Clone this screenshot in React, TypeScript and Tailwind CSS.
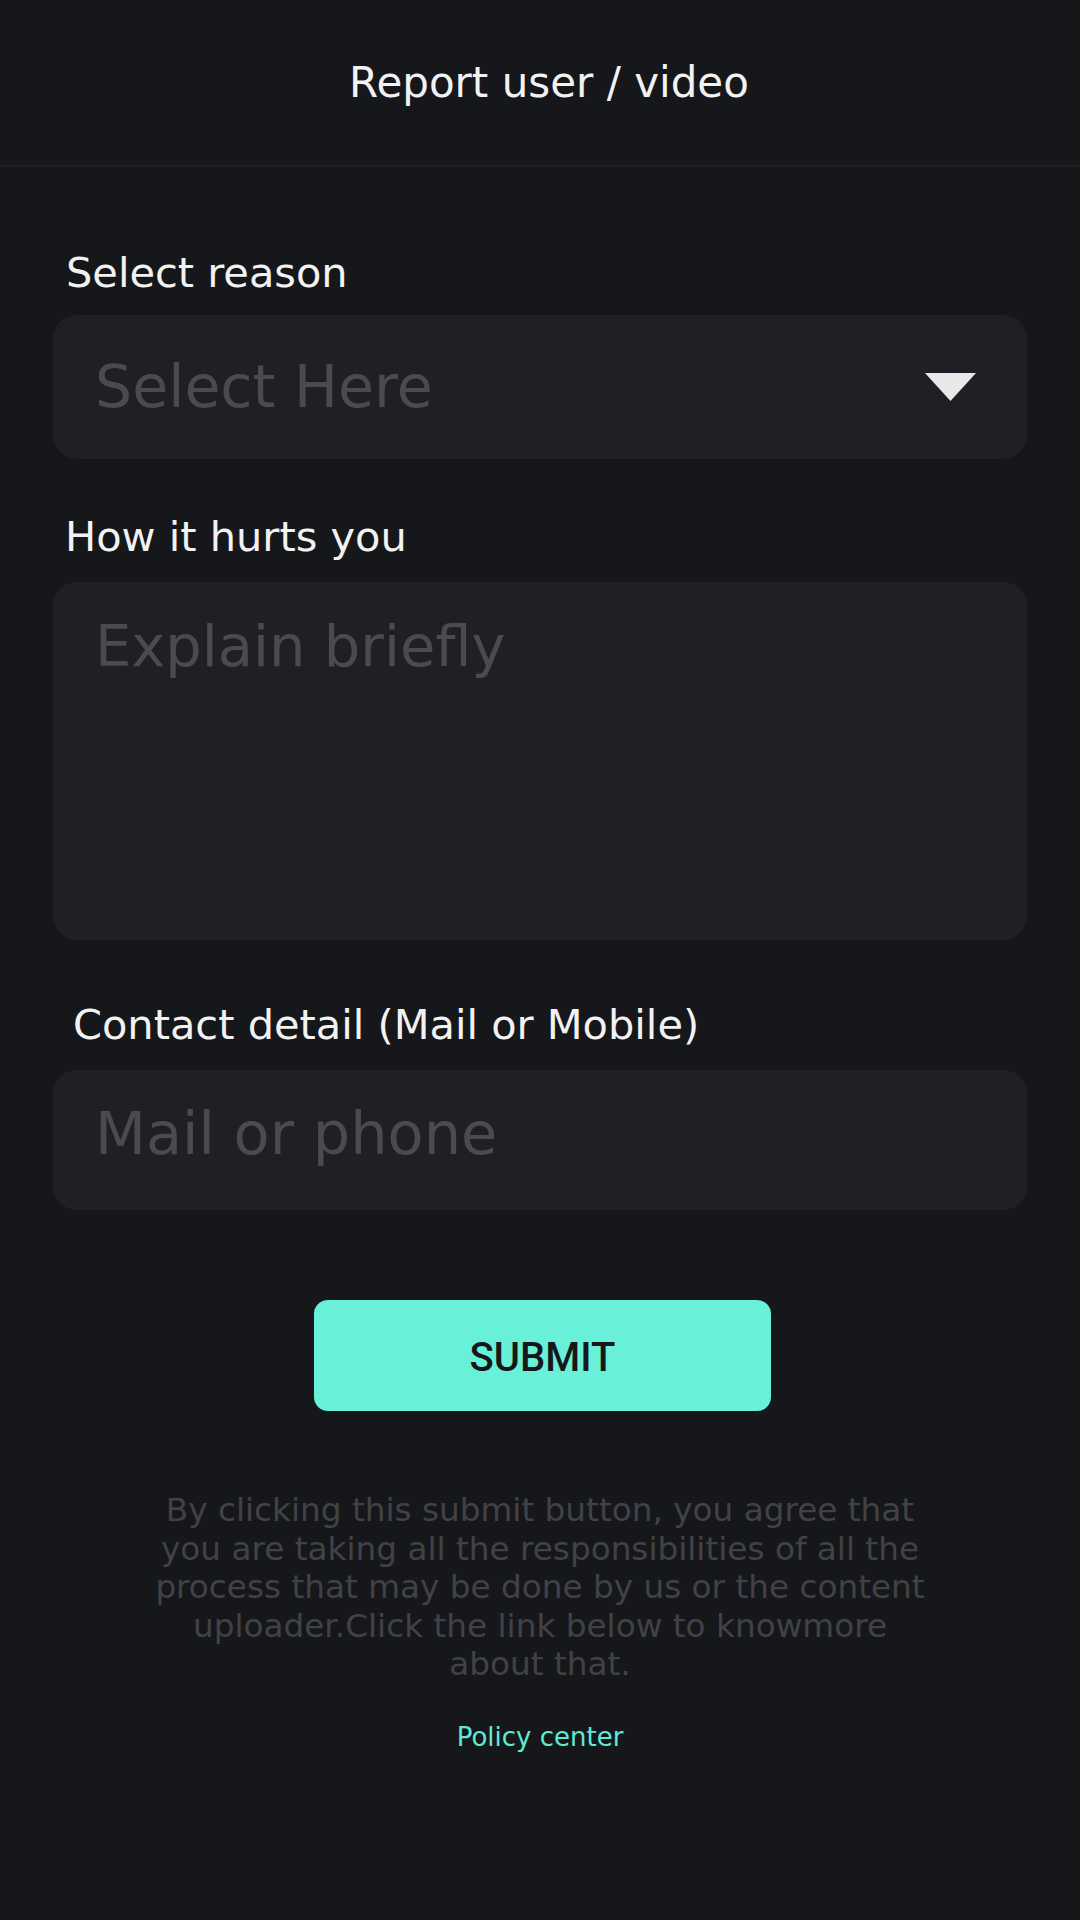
import { ReactNode } from "react";

const font = "font-['DejaVu_Sans','Liberation_Sans',sans-serif]";

const Label = ({ children, className = "" }: { children: ReactNode; className?: string }) => (
  <div className={`text-[41.5px] leading-[40px] text-[#f2f2f2] ${className}`}>{children}</div>
);

export default function App() {
  return (
    <div className={`min-h-[1920px] w-full bg-[#16171b] ${font}`}>
      {/* Header */}
      <header className="flex h-[167px] items-center justify-center border-b-2 border-[#1f2024] pl-[18px]">
        <h1 className="text-[42px] leading-none text-[#f2f2f2]">Report user / video</h1>
      </header>

      <main className="px-[53px]">
        <Label className="mt-[86px] pl-[13px]">Select reason</Label>
        <div className="mt-[22px] flex h-[144px] items-center justify-between rounded-[24px] bg-[#1f2025] pl-[42px] pr-[51px]">
          <span className="text-[58.5px] leading-none text-[#4a4b4e]">Select Here</span>
          <svg width="51" height="28" viewBox="0 0 51 28">
            <polygon points="0,0 51,0 25.5,28" fill="#e8e8e8" />
          </svg>
        </div>

        <Label className="mt-[58px] pl-[12px]">How it hurts you</Label>
        <div className="mt-[25px] h-[358px] rounded-[24px] bg-[#1f2025] pl-[42px] pt-[36px]">
          <span className="text-[57.5px] leading-none text-[#4a4b4e]">Explain briefly</span>
        </div>

        <Label className="mt-[65px] pl-[20px]">Contact detail (Mail or Mobile)</Label>
        <div className="mt-[25px] h-[140px] rounded-[24px] bg-[#1f2025] pl-[42px] pt-[34px]">
          <span className="text-[59px] leading-none text-[#4a4b4e]">Mail or phone</span>
        </div>

        <div className="mt-[90px] flex justify-center pl-[5px]">
          <button className="flex h-[111px] w-[457px] items-center justify-center rounded-[14px] bg-[#68f0d8] pt-1 font-['Roboto',sans-serif] text-[40px] font-medium leading-none text-[#16171b]">
            SUBMIT
          </button>
        </div>

        <p className="mx-auto mt-[80px] w-[786px] text-center text-[32.7px] leading-[38.5px] text-[#414246]">
          By clicking this submit button, you agree that you are taking all the responsibilities of all the process that may be done by us or the content uploader.Click the link below to knowmore about that.
        </p>

        <div className="mt-[40px] text-center text-[26px] leading-none text-[#5eead4]">Policy center</div>
      </main>
    </div>
  );
}
